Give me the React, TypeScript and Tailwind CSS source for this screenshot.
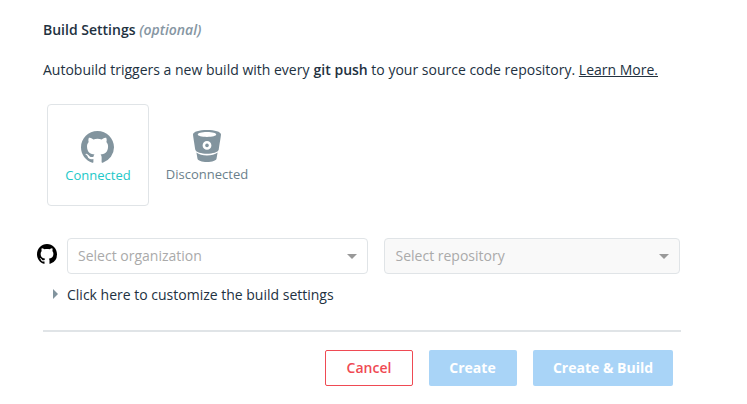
const MARK =
  'M8 0C3.58 0 0 3.58 0 8c0 3.54 2.29 6.53 5.47 7.59.4.07.55-.17.55-.38 0-.19-.01-.82-.01-1.49-2.01.37-2.53-.49-2.69-.94-.09-.23-.48-.94-.82-1.13-.28-.15-.68-.52-.01-.53.63-.01 1.08.58 1.23.82.72 1.21 1.87.87 2.33.66.07-.52.28-.87.51-1.07-1.78-.2-3.64-.89-3.64-3.95 0-.87.31-1.59.82-2.15-.08-.2-.36-1.02.08-2.12 0 0 .67-.21 2.2.82.64-.18 1.32-.27 2-.27s1.36.09 2 .27c1.53-1.04 2.2-.82 2.2-.82.44 1.1.16 1.92.08 2.12.51.56.82 1.27.82 2.15 0 3.07-1.87 3.75-3.65 3.95.29.25.54.73.54 1.48 0 1.07-.01 1.93-.01 2.2 0 .21.15.46.55.38A8.01 8.01 0 0 0 16 8c0-4.42-3.58-8-8-8z';

function GithubMark({ className }: { className: string }) {
  return (
    <svg viewBox="0 0 16 15.7" preserveAspectRatio="none" fill="currentColor" className={className}>
      <path d={MARK} />
    </svg>
  );
}

function Bucket() {
  return (
    <svg viewBox="0 0 28 32" fill="currentColor" className="h-8 w-7">
      <path
        fillRule="evenodd"
        d="M14 0C6.3 0 0 1.7 0 4.6c0 .9 1.700 11.200 2.300 15.200C2.800 22.200 8.400 23.800 14 23.800s11.200-1.600 11.700-4C26.300 15.800 28 5.500 28 4.600 28 1.700 21.700 0 14 0zM14 2.100c5.600 0 9.200 1 9.200 2.400s-3.600 2.400-9.200 2.400-9.200-1-9.200-2.400 3.600-2.400 9.200-2.400zM14 11a4.400 4.400 0 1 1 0 8.800 4.400 4.400 0 0 1 0-8.800z"
      />
      <circle cx="14" cy="15.400" r="1.800" />
      <path d="M3.400 22.500c2.500 1.900 6.300 2.900 10.600 2.900s8.100-1 10.600-2.900l-1.100 6.300C23.100 30.600 19.300 32 14 32s-9.100-1.400-9.500-3.200z" />
    </svg>
  );
}

function Select({ label, className }: { label: string; className: string }) {
  return (
    <div className={`flex h-9 items-center justify-between rounded border border-[#e0e4e7] px-2.5 text-[#aaa] ${className}`}>
      <span>{label}</span>
      <svg viewBox="0 0 10 5" className="h-[5px] w-2.5 fill-[#999]">
        <path d="M0 0h10L5 5z" />
      </svg>
    </div>
  );
}

export default function App() {
  return (
    <main className="h-[404px] w-[747px] bg-white pt-5 pl-[43px] font-['Open_Sans',sans-serif] text-sm leading-5 text-[#254356]">
      <div className="w-[638px] text-[#22313f]">
        <h2 className="font-semibold">
          Build Settings <em className="font-semibold text-[#8696a3]">(optional)</em>
        </h2>
        <p className="mt-5 whitespace-nowrap">
          Autobuild triggers a new build with every <strong className="ml-[0.5px] font-semibold">git push</strong> to your source code repository.{' '}
          <a className="underline">Learn More.</a>
        </p>
        <div className="mt-6 ml-1 flex text-[13px] text-[#82949e]">
          <div className="flex h-[102px] w-[102px] flex-col items-center rounded border border-[#e0e4e7] pt-[26px]">
            <GithubMark className="mr-px h-8 w-[33px]" />
            <span className="mt-0.5 text-[#22c8c8]">Connected</span>
          </div>
          <div className="ml-[7px] flex w-[102px] flex-col items-center pt-[26px]">
            <Bucket />
            <span className="mt-0.5 text-[#6b7f8b]">Disconnected</span>
          </div>
        </div>
        <div className="mt-8 -ml-1.5 flex">
          <GithubMark className="mt-1.5 mr-2.5 h-5 w-5 text-black" />
          <Select label="Select organization" className="w-[301px]" />
          <Select label="Select repository" className="ml-4 w-[296px] bg-[#f9f9f9] pl-[10.5px]" />
        </div>
        <div className="mt-[11px] ml-2.5 flex items-center">
          <svg viewBox="0 0 5 10" className="mr-[9px] mb-0.5 h-2.5 w-[5px] fill-[#82949e]">
            <path d="M0 0v10l5-5z" />
          </svg>
          Click here to customize the build settings
        </div>
        <div className="mt-[25px] h-0.5 bg-[#e0e4e7]" />
        <div className="mt-[18px] mr-2 flex justify-end gap-4 font-bold text-white">
          <button className="h-9 w-[88px] rounded-[2px] border border-[#ef4a53] font-semibold text-[#ef4a53]">Cancel</button>
          <button className="h-9 w-[88px] rounded-[2px] bg-[#a9d4f7] pr-px">Create</button>
          <button className="h-9 w-[140px] rounded-[2px] bg-[#a9d4f7]">Create &amp; Build</button>
        </div>
      </div>
    </main>
  );
}
